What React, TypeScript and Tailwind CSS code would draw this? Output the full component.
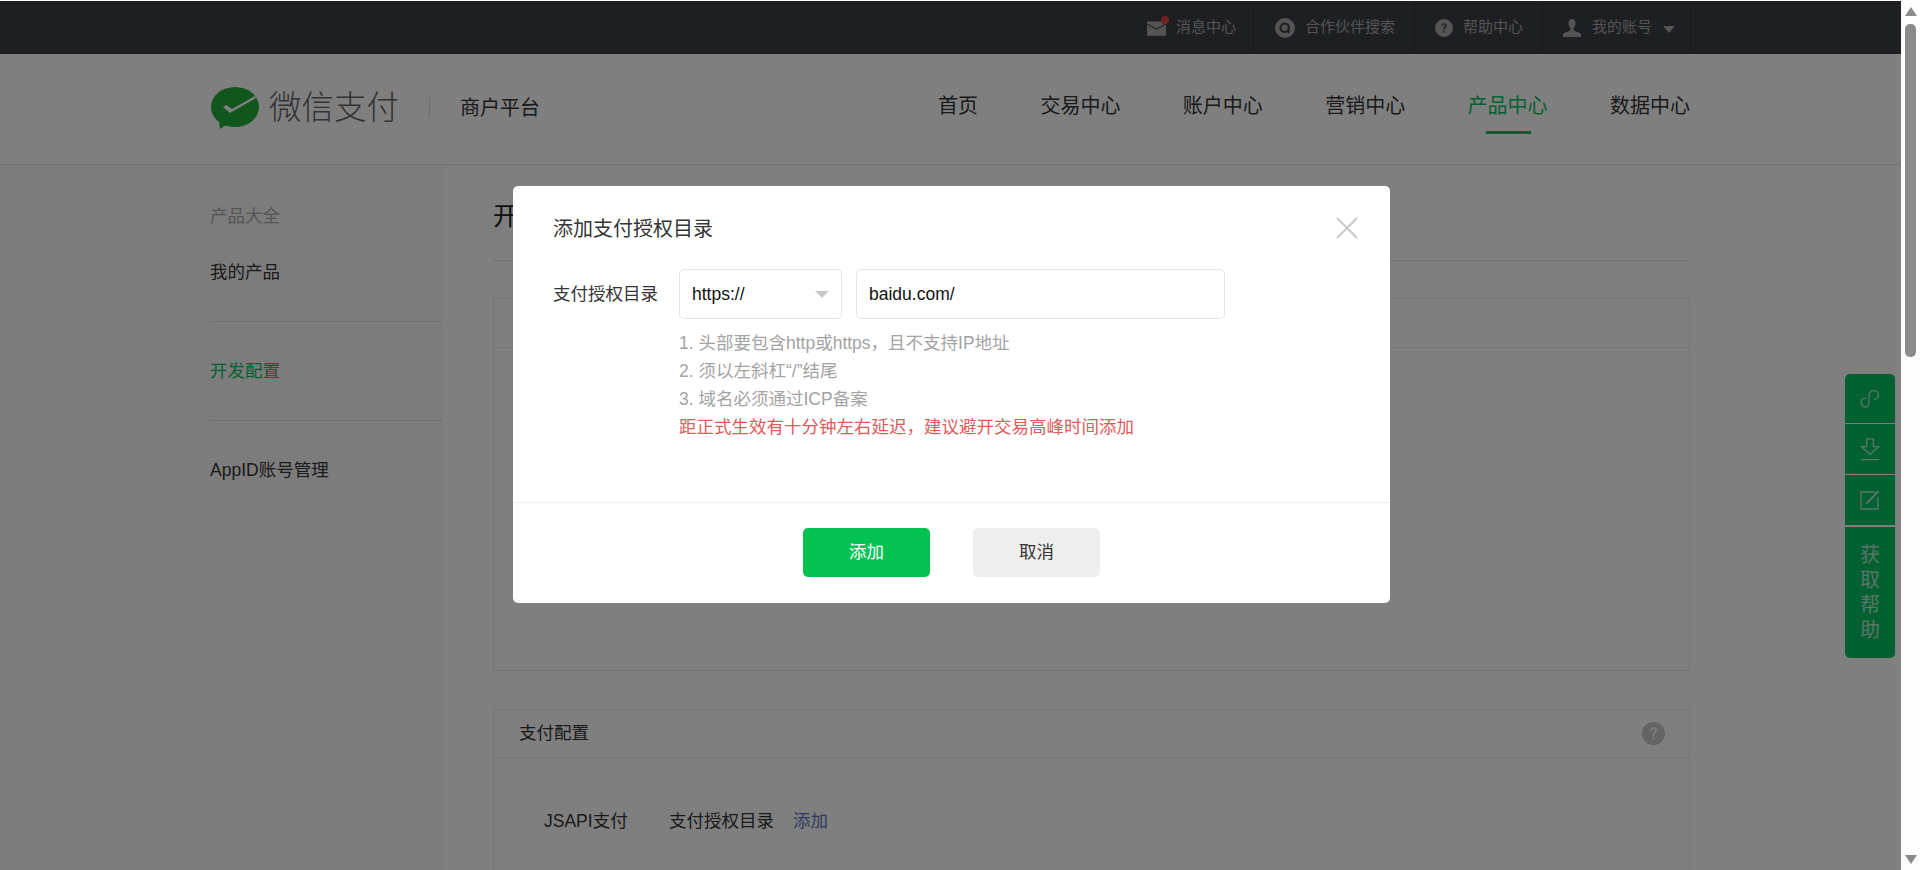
import React from 'react';

const topItems = [
  { label: '消息中心', pl: 'pl-[17px]', pr: 'pr-[17px]' },
  { label: '合作伙伴搜索', pl: 'pl-[21px]', pr: 'pr-[19px]' },
  { label: '帮助中心', pl: 'pl-[20px]', pr: 'pr-[19px]' },
];

const navItems = ['首页', '交易中心', '账户中心', '营销中心', '产品中心', '数据中心'];

function MailIcon() {
  return (
    <span className="relative block h-[17px] w-[19px]">
      <svg viewBox="0 0 20 15" className="absolute bottom-0 left-0 h-[15px] w-[19px]">
        <path d="M0 0h20v2.200L10 7.400 0 2.200z M0 3.600l10 5.300 10-5.300V15H0z" fill="#a8a8a8" />
      </svg>
      <span className="absolute -right-[3px] -top-[3px] h-[8px] w-[8px] rounded-full bg-[#e64340]" />
    </span>
  );
}

function SearchIcon() {
  return (
    <svg viewBox="0 0 20 20" className="h-[20px] w-[20px]">
      <circle cx="10" cy="10" r="10" fill="#a8a8a8" />
      <circle cx="9.700" cy="9.700" r="4.200" fill="none" stroke="#3c3f46" strokeWidth="2.200" />
      <path d="M12.500 12.500l2 2" stroke="#3c3f46" strokeWidth="2.200" />
    </svg>
  );
}

function HelpIcon({ size, fill, mark }: { size: number; fill: string; mark: string }) {
  return (
    <svg viewBox="0 0 20 20" style={{ width: size, height: size }}>
      <circle cx="10" cy="10" r="10" fill={fill} />
      <path
        d="M7 7.600c0-1.900 1.300-3 3.100-3 1.700 0 3 1 3 2.600 0 2.200-2.400 2.400-2.400 4.600H9.100c0-2.900 2.300-3.100 2.300-4.500 0-.7-.5-1.200-1.300-1.200-.9 0-1.400.6-1.500 1.500z"
        fill={mark}
      />
      <rect x="9.100" y="13.400" width="1.700" height="1.800" fill={mark} />
    </svg>
  );
}

function UserIcon() {
  return (
    <svg viewBox="0 0 18 18" className="h-[18px] w-[18px]">
      <path
        d="M9 0c2.200 0 3.500 1.800 3.500 4.300 0 2-.9 3.900-1.900 4.900v1.500c0 1 2.100 1.600 4.400 2.600 1.400.6 3 1.300 3 2.700v2H0v-2c0-1.400 1.600-2.100 3-2.700 2.300-1 4.400-1.600 4.400-2.600V9.200C6.400 8.200 5.500 6.300 5.500 4.300 5.500 1.800 6.800 0 9 0z"
        fill="#a8a8a8"
      />
    </svg>
  );
}

function Logo() {
  return (
    <svg viewBox="0 0 48 42" className="h-[42px] w-[48px]">
      <ellipse cx="24" cy="20" rx="24" ry="20" fill="#22ac38" />
      <path d="M8 36l1 6 9-6z" fill="#22ac38" />
      <path d="M12 20l3-2 6 4L44 9l1 2-26 15z" fill="#ffffff" />
    </svg>
  );
}

function Sidebar() {
  return (
    <aside className="w-[443px] shrink-0 bg-[#f9f9f9] pl-[210px] pt-[37px] text-[17.500px]">
      <div className="h-[28px] leading-[28px] text-[#aaaaaa]">产品大全</div>
      <div className="mt-[28px] h-[28px] leading-[28px] text-[#353535]">我的产品</div>
      <div className="mt-[35px] border-t border-[#e0e0e0]" />
      <div className="mt-[35px] h-[28px] leading-[28px] text-[#07c160]">开发配置</div>
      <div className="mt-[35px] border-t border-[#e0e0e0]" />
      <div className="mt-[35px] h-[28px] leading-[28px] text-[#353535]">AppID账号管理</div>
    </aside>
  );
}

function Content() {
  return (
    <main className="w-[1247px] pl-[50px]">
      <h1 className="mt-[33px] h-[36px] text-[25px] font-normal leading-[36px] text-[#222222]">开发配置</h1>
      <div className="mt-[26px] border-t border-[#e4e4e4]" />
      <section className="mt-[37px] h-[373px] border border-[#ececec]">
        <div className="h-[49px] border-b border-[#ececec]" />
      </section>
      <section className="mt-[38px] h-[400px] border border-[#ececec]">
        <div className="flex h-[48px] items-center justify-between border-b border-[#ececec] pl-[25px] pr-[24px] text-[17.500px] text-[#353535]">
          <span>支付配置</span>
          <HelpIcon size={23} fill="#c8c8c8" mark="#ffffff" />
        </div>
        <div className="mt-[49px] flex h-[28px] items-center pl-[50px] text-[17.500px] leading-[28px] text-[#353535]">
          <span className="w-[125px]">JSAPI支付</span>
          <span>支付授权目录</span>
          <span className="ml-[19px] text-[#5a78b8]">添加</span>
        </div>
      </section>
    </main>
  );
}

function FloatBar() {
  return (
    <div className="absolute left-[1845px] top-[373px] flex w-[50px] flex-col overflow-hidden rounded-[5px] bg-[#07c160] text-white/70">
      <div className="flex h-[50px] items-center justify-center border-b border-white">
        <svg viewBox="0 0 20 20" className="h-[20px] w-[20px]" fill="none" stroke="currentColor" strokeWidth="1.300">
          <path d="M6.500 9.500c-3-1-5 .5-5.300 3-.3 3 1.800 5.500 4.300 5.500s3.500-2 3.500-4.500V7c0-3 2-5.500 4.800-5.500 2.700 0 4.700 2.200 4.700 4.500 0 2.500-2 4.500-4.500 4" />
        </svg>
      </div>
      <div className="flex h-[51px] items-center justify-center border-b border-white pt-[1px]">
        <svg viewBox="0 0 20 24" className="h-[23px] w-[20px]" fill="none" stroke="currentColor" strokeWidth="1.300">
          <path d="M6.500 1h7v8H19l-9 8-9-8h5.500z" />
          <path d="M0.500 22.500h19" />
        </svg>
      </div>
      <div className="flex h-[52px] items-center justify-center border-b-2 border-white">
        <svg viewBox="0 0 20 20" className="h-[20px] w-[20px]" fill="none" stroke="currentColor" strokeWidth="1.300">
          <path d="M15 2H1v17h17V7" />
          <path d="M7.500 12.500L18.500 1" strokeWidth="2" />
          <path d="M6 14l1.500-1.500" strokeWidth="1.500" />
        </svg>
      </div>
      <div className="flex h-[131px] flex-col items-center justify-center pt-[1px] text-[20px] leading-[25px]">
        <span>获</span>
        <span>取</span>
        <span>帮</span>
        <span>助</span>
      </div>
    </div>
  );
}

function Dialog() {
  return (
    <div className="absolute left-[513px] top-[185px] w-[877px] rounded-[5px] bg-white">
      <div className="relative h-[317px] border-b border-[#eeeeee] pl-[40px]">
        <div className="pt-[28px] text-[20px] leading-[30px] text-[#353535]">添加支付授权目录</div>
        <svg viewBox="0 0 22 22" className="absolute left-[823px] top-[31px] h-[22px] w-[22px]" stroke="#cccccc" strokeWidth="2.400">
          <path d="M1 1l20 20M21 1L1 21" />
        </svg>
        <div className="mt-[25px] flex text-[17.500px]">
          <div className="w-[126px] leading-[50px] text-[#353535]">支付授权目录</div>
          <div>
            <div className="flex gap-[14px] text-[#111111]">
              <div className="flex h-[50px] w-[163px] items-center justify-between rounded-[5px] border border-[#e4e4e4] pl-[12px] pr-[12px]">
                <span>https://</span>
                <span className="h-0 w-0 border-x-[7px] border-t-[7px] border-x-transparent border-t-[#c8c8c8]" />
              </div>
              <div className="flex h-[50px] w-[369px] items-center rounded-[5px] border border-[#e4e4e4] pl-[12px]">baidu.com/</div>
            </div>
            <div className="mt-[10px] leading-[28px] text-[#a3a3a3]">
              <div>1. 头部要包含http或https，且不支持IP地址</div>
              <div>2. 须以左斜杠“/”结尾</div>
              <div>3. 域名必须通过ICP备案</div>
              <div className="text-[#df5a5a]">距正式生效有十分钟左右延迟，建议避开交易高峰时间添加</div>
            </div>
          </div>
        </div>
      </div>
      <div className="flex h-[100px] justify-center gap-[43px] pt-[25px] text-[17.500px]">
        <button className="h-[49px] w-[127px] rounded-[5px] bg-[#03c252] text-white">添加</button>
        <button className="h-[49px] w-[127px] rounded-[5px] bg-[#eeeeee] text-[#353535]">取消</button>
      </div>
    </div>
  );
}

function Scrollbar() {
  return (
    <div className="flex h-[870px] w-[19px] shrink-0 flex-col items-center bg-[#fdfdfd] pt-[7px]">
      <span className="h-0 w-0 border-x-[6.500px] border-b-[9px] border-x-transparent border-b-[#8b8b8b]" />
      <span className="mt-[8px] h-[333px] w-[11px] rounded-[5px] bg-[#8b8b8b]" />
      <span className="mt-[498px] h-0 w-0 border-x-[6.500px] border-t-[9px] border-x-transparent border-t-[#8b8b8b]" />
    </div>
  );
}

export default function App() {
  return (
    <div className="flex h-[870px] w-[1920px] overflow-hidden bg-white font-['Liberation_Sans','Noto_Sans_CJK_SC',sans-serif]">
      <div className="relative h-[870px] w-[1901px] shrink-0 overflow-hidden">
        <div className="h-[1px] bg-white" />
        <div className="relative h-[869px] overflow-hidden">
          {/* page behind the dialog */}
          <div className="h-[53px] bg-[#3c3f46]">
            <div className="ml-[210px] flex h-[53px] w-[1481px] justify-end text-[15px] text-[#a8a8a8]">
              {topItems.map((item, i) => (
                <div key={item.label} className={`flex items-center gap-[10px] border-r border-[#30333a] ${item.pl} ${item.pr}`}>
                  {i === 0 && <MailIcon />}
                  {i === 1 && <SearchIcon />}
                  {i === 2 && <HelpIcon size={18} fill="#a8a8a8" mark="#3c3f46" />}
                  <span>{item.label}</span>
                </div>
              ))}
              <div className="flex items-center border-r border-[#30333a] pl-[20px] pr-[15px]">
                <UserIcon />
                <span className="ml-[11px]">我的账号</span>
                <span className="ml-[11px] mt-[3px] h-0 w-0 border-x-[6.500px] border-t-[7px] border-x-transparent border-t-[#a8a8a8]" />
              </div>
            </div>
          </div>
          <header className="flex h-[111px] border-b border-[#e4e4e4] bg-white pl-[211px] pr-[211px]">
            <div className="mt-[33px]">
              <Logo />
            </div>
            <span className="ml-[10px] mt-[31px] text-[32.500px] font-light leading-[46px] text-[#666666]">微信支付</span>
            <span className="ml-[30px] mt-[43px] h-[20px] border-l border-[#dddddd]" />
            <span className="ml-[30px] mt-[39px] text-[20px] leading-[30px] text-[#353535]">商户平台</span>
            <nav className="ml-auto flex gap-[62.400px] text-[20px] text-[#353535]">
              {navItems.map((item) => (
                <div key={item} className="relative pt-[37px] leading-[30px]">
                  {item === '产品中心' ? <span className="text-[#07c160]">{item}</span> : item}
                  {item === '产品中心' && <span className="absolute left-[18px] top-[77px] h-[3px] w-[45px] bg-[#07c160]" />}
                </div>
              ))}
            </nav>
          </header>
          <div className="flex h-[705px]">
            <Sidebar />
            <Content />
          </div>
          <FloatBar />
          <div className="absolute inset-0 bg-black/50" />
          <Dialog />
        </div>
      </div>
      <Scrollbar />
    </div>
  );
}
